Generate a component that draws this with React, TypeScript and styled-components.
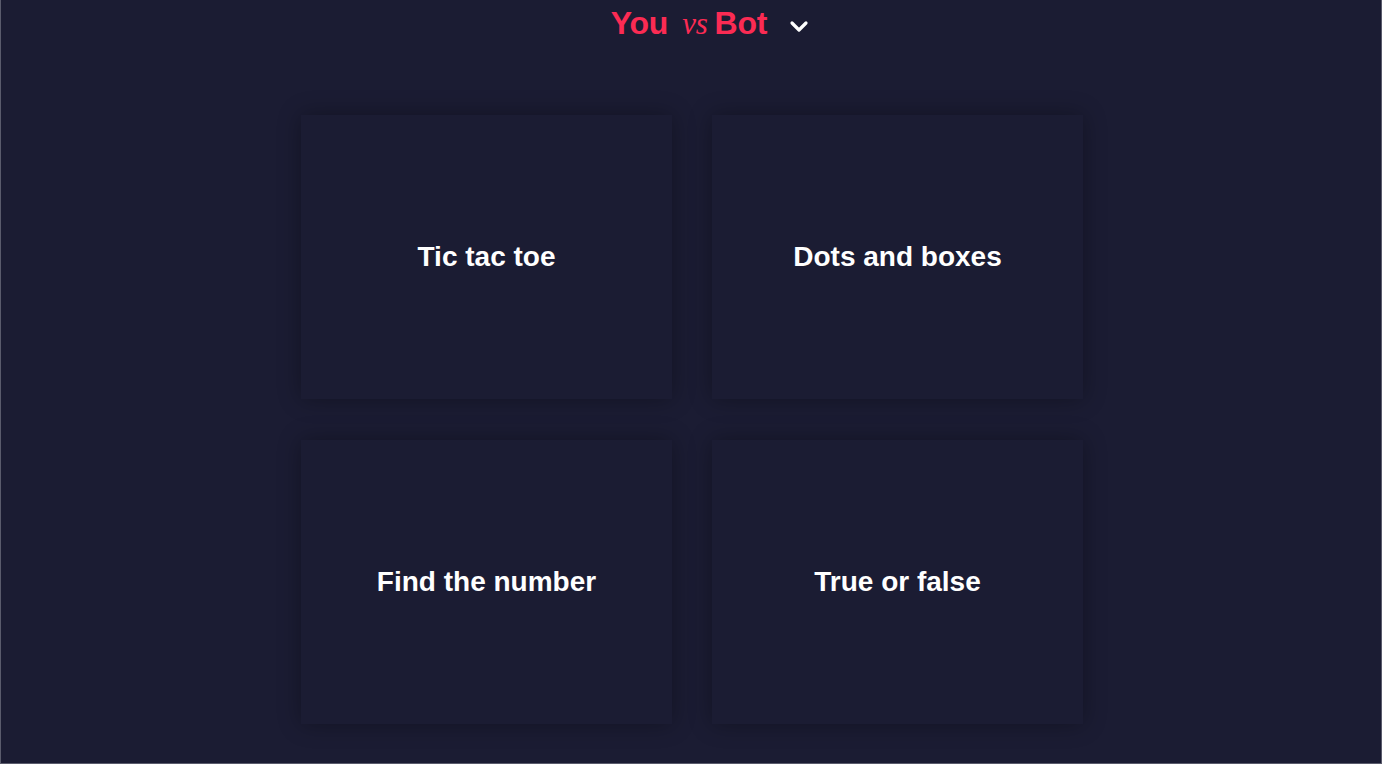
import React from "react";
import styled, { createGlobalStyle } from "styled-components";

const Global = createGlobalStyle`
  html, body { margin: 0; padding: 0; background: #1b1c33; }
  body { font-family: "Liberation Sans", Arial, sans-serif; }
`;

const Page = styled.div`
  box-sizing: border-box;
  width: 1382px;
  height: 764px;
  background: #1b1c33;
  border-left: 1px solid #5a5b6c;
  border-right: 1px solid #5a5b6c;
  border-bottom: 1px solid #5a5b6c;
  display: flex;
  flex-direction: column;
  align-items: center;
  overflow: hidden;
`;

const Header = styled.header`
  height: 46px;
  display: flex;
  align-items: center;
  gap: 22px;
  padding-left: 38px;
`;

const Title = styled.h1`
  margin: 0;
  font-family: "Liberation Sans", Arial, sans-serif;
  font-weight: 700;
  font-size: 32px;
  color: #fb2b53;
  letter-spacing: -0.2px;
  display: flex;
  align-items: baseline;
`;

const Vs = styled.span`
  font-family: "Liberation Serif", "Times New Roman", serif;
  font-style: italic;
  font-weight: 400;
  font-size: 31px;
  margin: 0 7px 0 14px;
`;

const Toggle = styled.button`
  background: none;
  border: 0;
  padding: 0;
  margin-top: 6px;
  display: flex;
  cursor: pointer;
`;

const Grid = styled.main`
  margin-top: 69px;
  margin-left: 2px;
  display: grid;
  grid-template-columns: repeat(2, 371px);
  grid-auto-rows: 284px;
  column-gap: 40px;
  row-gap: 41px;
`;

const Card = styled.button`
  background: #1b1c33;
  border: 0;
  box-shadow: 0 0 22px rgba(0, 0, 0, 0.32);
  color: #ffffff;
  font-family: "Liberation Sans", Arial, sans-serif;
  font-weight: 700;
  font-size: 28px;
  display: flex;
  align-items: center;
  justify-content: center;
  cursor: pointer;
`;

const games = ["Tic tac toe", "Dots and boxes", "Find the number", "True or false"];

export default function App() {
  return (
    <>
      <Global />
      <Page>
        <Header>
          <Title>
            <span>You</span>
            <Vs>vs</Vs>
            <span>Bot</span>
          </Title>
          <Toggle aria-label="menu">
            <svg width="20" height="14" viewBox="0 0 20 14">
              <path d="M3 4 L10 11 L17 4" fill="none" stroke="#fff" strokeWidth="3.2" strokeLinecap="round" strokeLinejoin="round" />
            </svg>
          </Toggle>
        </Header>
        <Grid>
          {games.map((g) => (
            <Card key={g}>{g}</Card>
          ))}
        </Grid>
      </Page>
    </>
  );
}
